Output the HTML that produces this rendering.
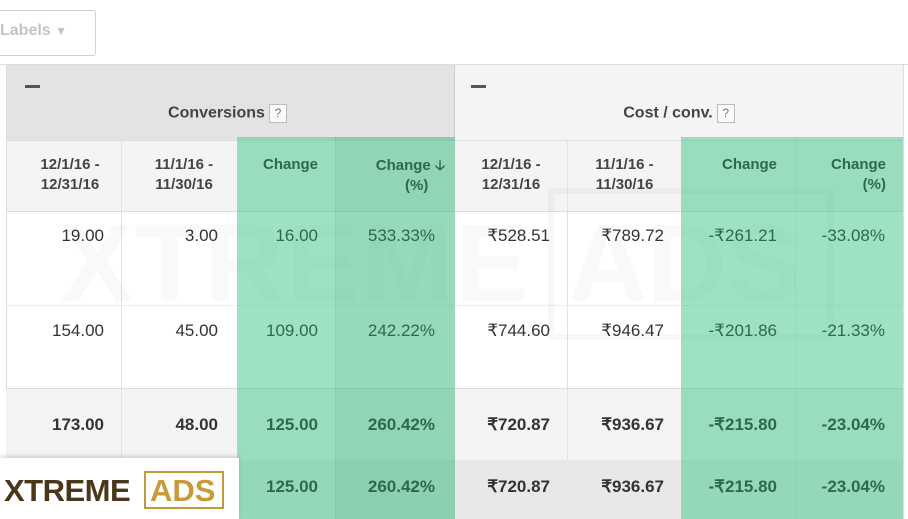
<!DOCTYPE html><html><head><style>
html,body{margin:0;width:908px;height:519px;overflow:hidden;background:#fff;font-family:"Liberation Sans",Arial,sans-serif;position:relative}
.a{position:absolute}
.c{position:absolute;font-size:17px;color:#333;text-align:right;line-height:20px}
.h{position:absolute;font-size:15px;font-weight:bold;color:#444;text-align:right;line-height:20px}
.g{color:#2b6a4c}
.b{font-weight:bold}
.q{display:inline-block;width:16px;height:17px;border:1px solid #bbb;background:#fafafa;font-size:12px;font-weight:normal;color:#777;text-align:center;line-height:17px;vertical-align:middle;margin-left:4px}
</style></head><body>
<div class="a" style="left:-10px;top:10px;width:104px;height:44px;border:1px solid #d0d0d0;border-radius:3px;"></div>
<div class="a" style="left:0;top:22px;font-size:16px;font-weight:bold;color:#c4c4c4">Labels <span style="font-size:12px">▼</span></div>
<div class="a" style="left:0;top:64px;width:908px;height:1px;background:#ddd"></div>
<div class="a" style="left:6px;top:65px;width:449px;height:75px;background:#e3e3e3"></div>
<div class="a" style="left:455px;top:65px;width:448px;height:75px;background:#f4f4f4"></div>
<div class="a" style="left:454px;top:65px;width:1px;height:75px;background:#ccc"></div>
<div class="a" style="left:903px;top:65px;width:1px;height:454px;background:#ddd"></div>
<div class="a" style="left:25px;top:85px;width:15px;height:3px;background:#555"></div>
<div class="a" style="left:471px;top:85px;width:15px;height:3px;background:#555"></div>
<div class="a" style="left:0;width:455px;top:104px;text-align:center;font-size:16px;font-weight:bold;color:#444">Conversions<span class="q">?</span></div>
<div class="a" style="left:455px;width:448px;top:104px;text-align:center;font-size:16px;font-weight:bold;color:#444">Cost / conv.<span class="q">?</span></div>
<div class="a" style="left:6px;top:140px;width:897px;height:70px;background:#f4f4f4;border-top:1px solid #ddd;border-bottom:1px solid #ddd"></div>
<div class="a" style="left:6px;top:65px;width:1px;height:454px;background:#ddd"></div>
<div class="a" style="left:121px;top:140px;width:1px;height:379px;background:#e2e2e2"></div>
<div class="a" style="left:567px;top:140px;width:1px;height:379px;background:#e2e2e2"></div>
<div class="a" style="left:6px;top:305px;width:897px;height:1px;background:#eee"></div>
<div class="a" style="left:6px;top:388px;width:897px;height:72px;background:#f4f4f4;border-top:1px solid #ddd"></div>
<div class="a" style="left:121px;top:388px;width:1px;height:131px;background:#e2e2e2"></div>
<div class="a" style="left:567px;top:388px;width:1px;height:131px;background:#e2e2e2"></div>
<div class="a" style="left:6px;top:460px;width:897px;height:59px;background:#e8e8e8"></div>
<div class="a" style="left:60px;top:200px;font-size:110px;font-weight:bold;color:rgba(0,0,0,0.025);letter-spacing:2px">XTREME</div>
<div class="a" style="left:548px;top:188px;width:273px;height:140px;border:6px solid rgba(0,0,0,0.03)"></div>
<div class="a" style="left:568px;top:200px;font-size:110px;font-weight:bold;color:rgba(0,0,0,0.025)">ADS</div>
<div class="a" style="left:237px;top:137px;width:98px;height:382px;background:rgba(80,200,145,0.55)"></div>
<div class="a" style="left:335px;top:137px;width:120px;height:382px;background:rgba(70,190,135,0.57)"></div>
<div class="a" style="left:681px;top:137px;width:114px;height:382px;background:rgba(80,200,145,0.55)"></div>
<div class="a" style="left:795px;top:137px;width:108px;height:382px;background:rgba(80,200,145,0.55)"></div>
<div class="a" style="left:335px;top:137px;width:1px;height:382px;background:rgba(0,0,0,0.04)"></div>
<div class="a" style="left:795px;top:137px;width:1px;height:382px;background:rgba(0,0,0,0.04)"></div>
<div class="h" style="left:8px;width:124px;top:155px;text-align:center">12/1/16 -<br>12/31/16</div>
<div class="h" style="left:122px;width:124px;top:155px;text-align:center">11/1/16 -<br>11/30/16</div>
<div class="h" style="left:8px;width:124px;top:155px;text-align:center;color:transparent"></div>
<div class="h g" style="left:237px;width:81px;top:155px">Change</div>
<div class="h g" style="left:335px;width:110px;top:155px">Change <b style="font-size:14px">🡣</b><br>(%)&nbsp;&nbsp;&nbsp;&nbsp;</div>
<div class="h" style="left:455px;width:112px;top:155px;text-align:center">12/1/16 -<br>12/31/16</div>
<div class="h" style="left:568px;width:113px;top:155px;text-align:center">11/1/16 -<br>11/30/16</div>
<div class="h g" style="left:681px;width:96px;top:155px">Change</div>
<div class="h g" style="left:795px;width:91px;top:155px">Change<br>(%)</div>
<div class="c" style="left:8px;width:96px;top:226px">19.00</div>
<div class="c" style="left:122px;width:96px;top:226px">3.00</div>
<div class="c g" style="left:237px;width:81px;top:226px">16.00</div>
<div class="c g" style="left:335px;width:100px;top:226px">533.33%</div>
<div class="c" style="left:455px;width:95px;top:226px">₹528.51</div>
<div class="c" style="left:568px;width:96px;top:226px">₹789.72</div>
<div class="c g" style="left:681px;width:96px;top:226px">-₹261.21</div>
<div class="c g" style="left:795px;width:90px;top:226px">-33.08%</div>
<div class="c" style="left:8px;width:96px;top:321px">154.00</div>
<div class="c" style="left:122px;width:96px;top:321px">45.00</div>
<div class="c g" style="left:237px;width:81px;top:321px">109.00</div>
<div class="c g" style="left:335px;width:100px;top:321px">242.22%</div>
<div class="c" style="left:455px;width:95px;top:321px">₹744.60</div>
<div class="c" style="left:568px;width:96px;top:321px">₹946.47</div>
<div class="c g" style="left:681px;width:96px;top:321px">-₹201.86</div>
<div class="c g" style="left:795px;width:90px;top:321px">-21.33%</div>
<div class="c b" style="left:8px;width:96px;top:415px">173.00</div>
<div class="c b" style="left:122px;width:96px;top:415px">48.00</div>
<div class="c b g" style="left:237px;width:81px;top:415px">125.00</div>
<div class="c b g" style="left:335px;width:100px;top:415px">260.42%</div>
<div class="c b" style="left:455px;width:95px;top:415px">₹720.87</div>
<div class="c b" style="left:568px;width:96px;top:415px">₹936.67</div>
<div class="c b g" style="left:681px;width:96px;top:415px">-₹215.80</div>
<div class="c b g" style="left:795px;width:90px;top:415px">-23.04%</div>
<div class="c b g" style="left:237px;width:81px;top:477px">125.00</div>
<div class="c b g" style="left:335px;width:100px;top:477px">260.42%</div>
<div class="c b" style="left:455px;width:95px;top:477px">₹720.87</div>
<div class="c b" style="left:568px;width:96px;top:477px">₹936.67</div>
<div class="c b g" style="left:681px;width:96px;top:477px">-₹215.80</div>
<div class="c b g" style="left:795px;width:90px;top:477px">-23.04%</div>
<div class="a" style="left:0;top:458px;width:239px;height:61px;background:#fff;box-shadow:0 -2px 4px rgba(0,0,0,0.15)"></div>
<div class="a" style="left:4px;top:473px;font-size:31px;font-weight:bold;color:#4a3618;letter-spacing:-0.5px;line-height:36px">XTREME</div>
<div class="a" style="left:144px;top:471px;width:80px;height:38px;border:2px solid #c19a3e;box-sizing:border-box"></div>
<div class="a" style="left:150px;top:473px;font-size:31px;font-weight:bold;color:#c79b38;line-height:36px">ADS</div>
</body></html>
